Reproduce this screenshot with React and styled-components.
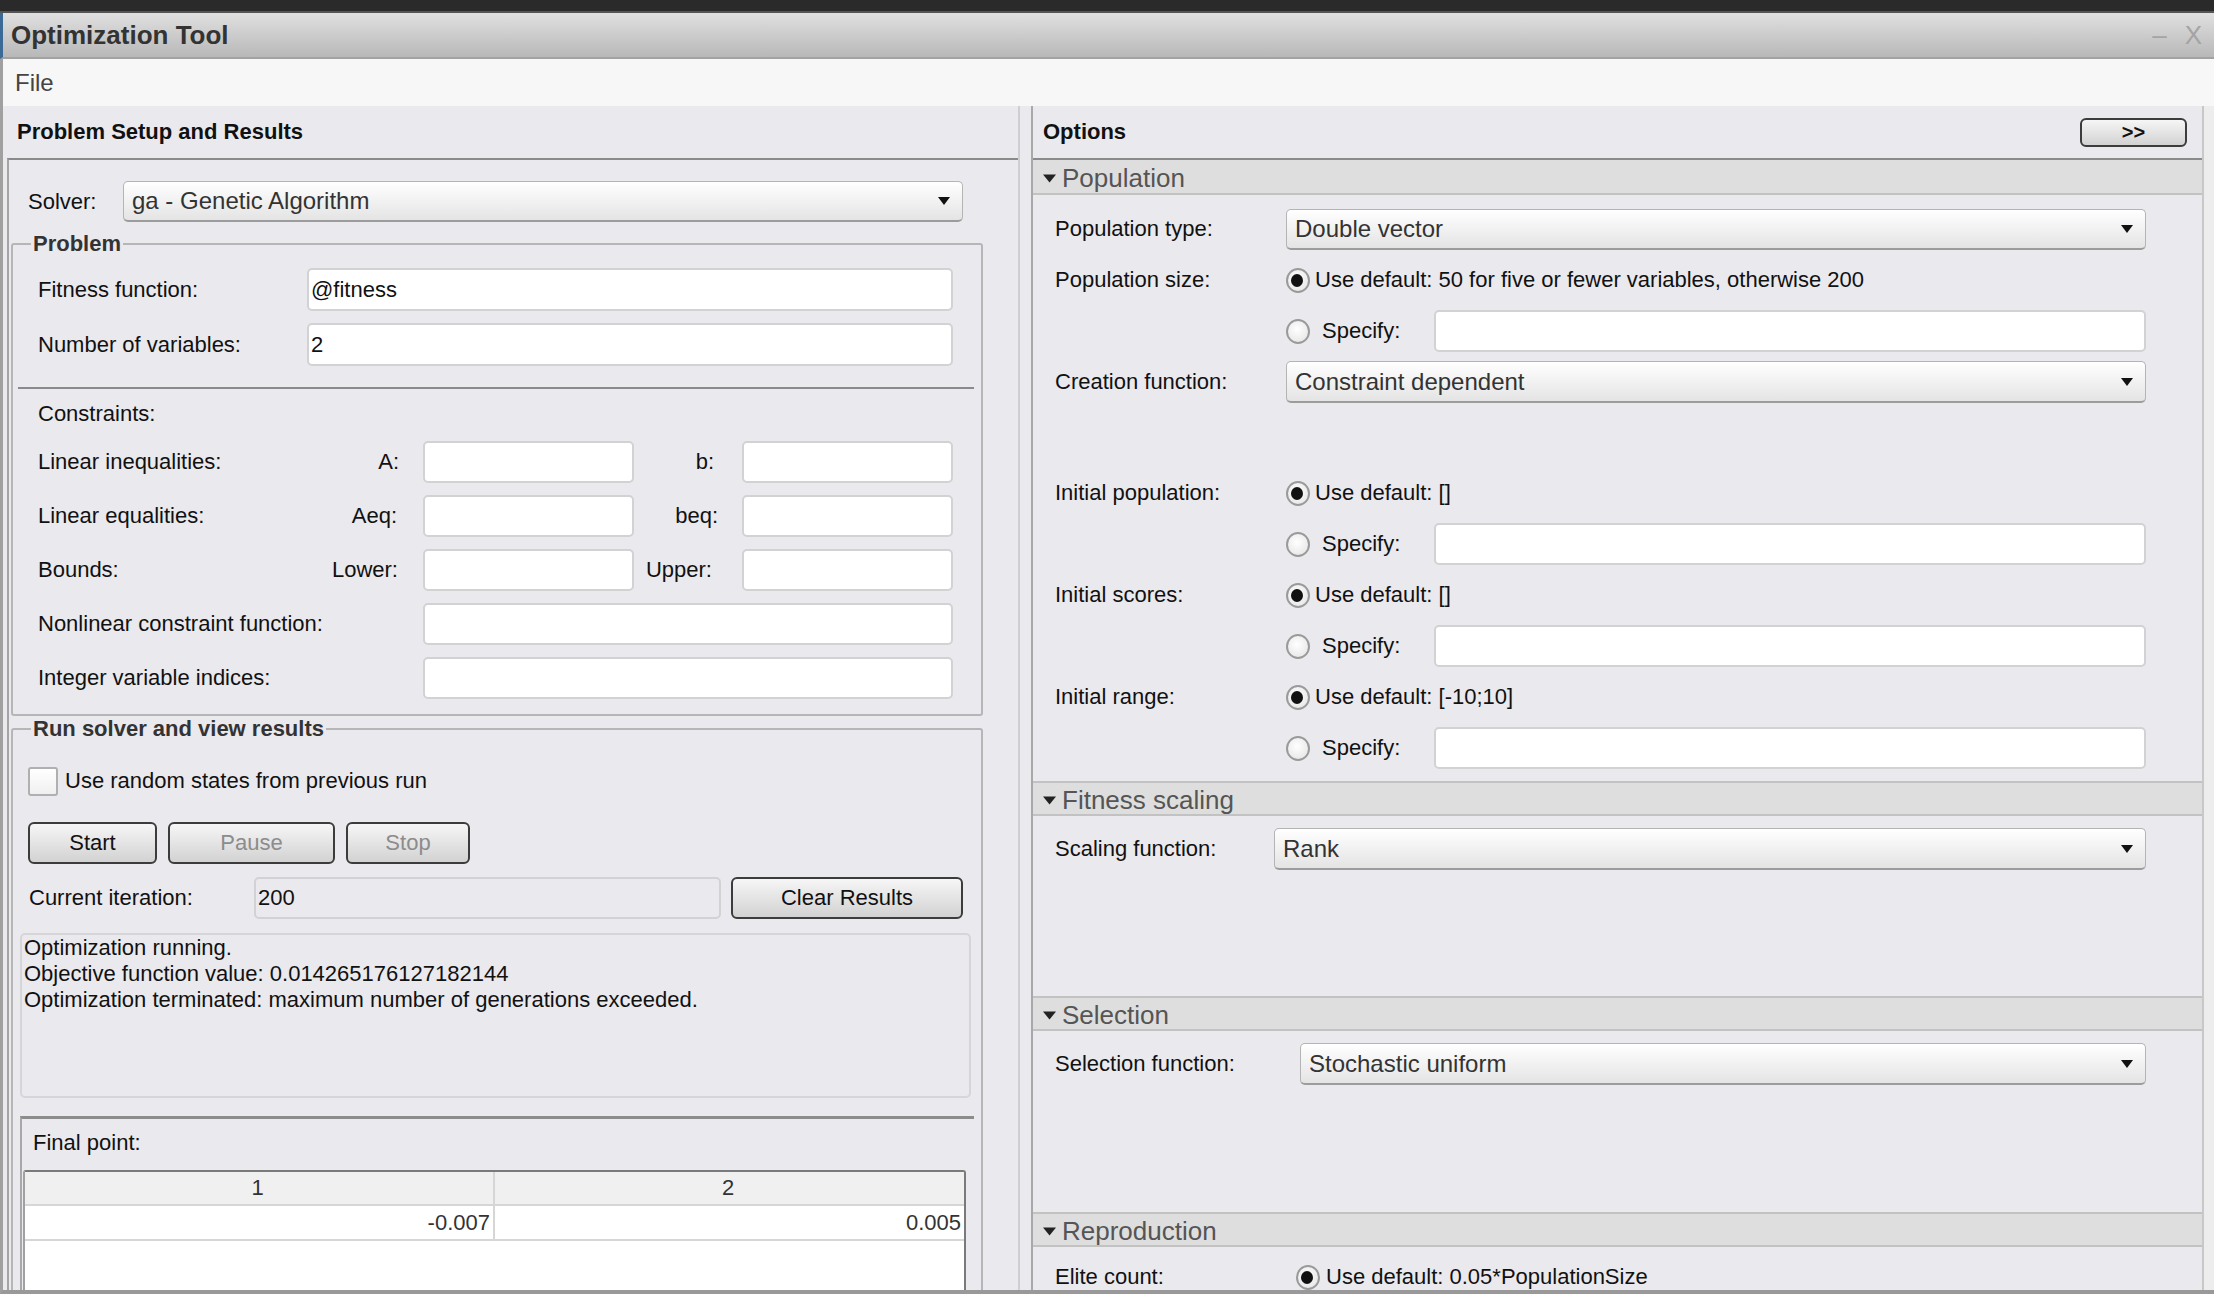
import styled, { createGlobalStyle } from "styled-components";

const GlobalStyle = createGlobalStyle`
  html, body {
    margin: 0;
    padding: 0;
    background: #2b2b2b;
  }
  body {
    font-family: "Liberation Sans", Arial, Helvetica, sans-serif;
  }
  * {
    box-sizing: border-box;
  }
`;

const Window = styled.div`
  width: 2214px;
  height: 1294px;
  display: flex;
  flex-direction: column;
  overflow: hidden;
  background: #2b2b2b;
`;

const TopStrip = styled.div`
  height: 13px;
  flex-shrink: 0;
  background: #2a2a2a;
  border-bottom: 2px solid #555;
`;

const TitleBar = styled.div`
  height: 46px;
  flex-shrink: 0;
  display: flex;
  align-items: center;
  justify-content: space-between;
  padding: 0 12px 0 11px;
  background: linear-gradient(#e0e0e0, #b8b8b8);
  border-bottom: 2px solid #a2a2a2;
  border-left: 3px solid #3b6a96;
`;

const Title = styled.div`
  font-size: 26px;
  font-weight: bold;
  color: #333;
  margin-left: -3px;
`;

const WinControls = styled.div`
  display: flex;
  gap: 18px;
  font-size: 26px;
  color: #a4a4a4;
`;

const MenuBar = styled.div`
  height: 47px;
  flex-shrink: 0;
  display: flex;
  align-items: center;
  padding-left: 12px;
  background: #f7f7f7;
  border-left: 3px solid #a0a0a0;
`;

const MenuItem = styled.span`
  font-size: 24px;
  color: #444;
`;

const Body = styled.div`
  flex: 1;
  display: flex;
  min-height: 0;
  background: #eae9ed;
  border-left: 3px solid #a0a0a0;
  border-bottom: 4px solid #999;
  overflow: hidden;
`;

const LeftPanel = styled.div`
  width: 1015px;
  flex-shrink: 0;
  display: flex;
  flex-direction: column;
`;

const PanelHeader = styled.div`
  height: ${(p) => p.$h || 52}px;
  flex-shrink: 0;
  display: flex;
  align-items: center;
  justify-content: space-between;
  padding: 0 15px 0 ${(p) => p.$pad || 14}px;
  font-size: 22px;
  font-weight: bold;
  color: #111;
  border-bottom: ${(p) => (p.$line ? "2px solid #8a8a8a" : "none")};
`;

const LeftBox = styled.div`
  flex: 1;
  margin-left: 4px;
  border-left: 2px solid #a4a4a4;
  border-top: 2px solid #8a8a8a;
  overflow: hidden;
  padding-top: 21px;
`;

const SolverRow = styled.div`
  display: flex;
  align-items: center;
  padding-left: 19px;
  height: 41px;
`;

const Label = styled.span`
  font-size: 22px;
  color: #111;
  white-space: nowrap;
  width: ${(p) => (p.$w ? `${p.$w}px` : "auto")};
  text-align: ${(p) => p.$align || "left"};
  padding-right: ${(p) => p.$pr || 0}px;
  flex-shrink: 0;
`;

const SelectBox = styled.div`
  height: ${(p) => p.$h || 42}px;
  width: ${(p) => (p.$w ? `${p.$w}px` : "auto")};
  flex: ${(p) => (p.$w ? "none" : 1)};
  display: flex;
  align-items: center;
  justify-content: space-between;
  padding: 0 12px 0 8px;
  border: 1px solid #b4b4b4;
  border-bottom: 2px solid #9c9c9c;
  border-radius: 5px;
  background: linear-gradient(#ffffff, #e4e4e4);
  font-size: 24px;
  color: #333;
`;

const Arrow = () => (
  <svg width="12" height="10" viewBox="0 0 12 10">
    <path d="M0 1 L12 1 L6 9 Z" fill="#111" />
  </svg>
);

const Select = ({ value, w, h }) => (
  <SelectBox $w={w} $h={h}>
    <span>{value}</span>
    <Arrow />
  </SelectBox>
);

const GroupBox = styled.fieldset`
  margin: ${(p) => p.$mt || 0}px 0 0 2px;
  width: 972px;
  min-width: 0;
  min-height: ${(p) => p.$minH || 0}px;
  padding: 0 7px ${(p) => p.$pb || 0}px 5px;
  border: 2px solid #b6b6b6;
  border-radius: 3px;
`;

const GroupTitle = styled.legend`
  margin-left: 13px;
  padding: 0 2px;
  font-size: 22px;
  line-height: 26px;
  font-weight: bold;
  color: #333;
`;

const FieldRows = styled.div`
  display: flex;
  flex-direction: column;
  gap: 12px;
  padding: 11px 21px 0 20px;
`;

const FieldRow = styled.div`
  display: grid;
  grid-template-columns: 269px 1fr;
  align-items: center;
  height: 43px;
`;

const TextField = styled.div`
  height: ${(p) => p.$h || 42}px;
  display: flex;
  align-items: center;
  padding-left: 2px;
  background: ${(p) => (p.$disabled ? "#eae9ed" : "#fff")};
  border: 2px solid #d2d2d4;
  border-radius: 5px;
  font-size: 22px;
  color: #111;
  grid-column: ${(p) => p.$span || "auto"};
  width: ${(p) => (p.$w ? `${p.$w}px` : "auto")};
  flex: ${(p) => (p.$w ? "none" : 1)};
`;

const Separator = styled.div`
  height: 2px;
  margin-top: 21px;
  background: #8a8a8a;
`;

const Caption = styled.div`
  font-size: 22px;
  line-height: 26px;
  color: #111;
  margin: 12px 0 0 20px;
`;

const ConstraintGrid = styled.div`
  display: grid;
  grid-template-columns: 267px 118px 211px 108px 211px;
  grid-auto-rows: 42px;
  row-gap: 12px;
  align-items: center;
  margin-top: 14px;
  padding-left: 20px;
`;

const WideLabel = styled(Label)`
  grid-column: 1 / 3;
`;

const CheckRow = styled.div`
  display: flex;
  align-items: center;
  gap: 7px;
  margin: 25px 0 0 10px;
  height: 28px;
`;

const CheckBox = styled.span`
  width: 30px;
  height: 29px;
  border: 2px solid #b0b0b0;
  border-radius: 3px;
  background: linear-gradient(#ffffff, #f0f0f0);
`;

const ButtonRow = styled.div`
  display: flex;
  gap: 11px;
  margin: 27px 0 0 10px;
`;

const Button = styled.div`
  width: ${(p) => p.$w}px;
  height: ${(p) => p.$h || 42}px;
  display: flex;
  align-items: center;
  justify-content: center;
  border: 2px solid #3c3c3c;
  border-radius: 6px;
  background: linear-gradient(#f6f6f6, #d2d2d2);
  font-size: ${(p) => p.$fs || 22}px;
  color: ${(p) => (p.$disabled ? "#8c8c8c" : "#111")};
`;

const IterationRow = styled.div`
  display: flex;
  align-items: center;
  margin: 13px 0 0 11px;
  height: 42px;
  width: 935px;
`;

const StatusBox = styled.div`
  margin: 14px 3px 0 2px;
  height: 165px;
  padding: 0 2px;
  border: 2px solid #d6d6d8;
  border-radius: 5px;
  font-size: 22px;
  line-height: 26px;
  color: #111;
`;

const ResultPanel = styled.div`
  margin: 18px 0 0 2px;
  border-top: 3px solid #8c8c8c;
  border-left: 2px solid #a8a8a8;
  padding: 11px 0 0 1px;
`;

const ResultLabel = styled.div`
  font-size: 22px;
  line-height: 26px;
  color: #111;
  padding-left: 10px;
`;

const Table = styled.div`
  margin-top: 14px;
  width: 943px;
  border-top: 2px solid #7a7a7a;
  border-left: 2px solid #a0a0a0;
  border-right: 2px solid #7a7a7a;
  border-radius: 3px 3px 0 0;
  background: #fff;
  height: 200px;
`;

const TableRow = styled.div`
  display: grid;
  grid-template-columns: 470px 1fr;
  height: ${(p) => (p.$head ? 34 : 35)}px;
  background: ${(p) => (p.$head ? "#f0f0f0" : "#fff")};
  border-bottom: 2px solid #d6d6d6;
`;

const Cell = styled.div`
  display: flex;
  align-items: center;
  justify-content: ${(p) => (p.$head ? "center" : "flex-end")};
  padding-right: 3px;
  font-size: 22px;
  color: #333;
  border-right: ${(p) => (p.$last ? "none" : "2px solid #d6d6d6")};
`;

const Splitter = styled.div`
  width: 13px;
  flex-shrink: 0;
  border-left: 2px solid #cfcfd2;
`;

const RightPanel = styled.div`
  width: 1171px;
  flex-shrink: 0;
  display: flex;
  flex-direction: column;
  border-left: 2px solid #a8a8a8;
`;

const RightEdge = styled.div`
  flex: 1;
  background: #ededee;
  border-left: 2px solid #c8c8c8;
`;

const SectionHeader = styled.div`
  height: 35px;
  flex-shrink: 0;
  display: flex;
  align-items: center;
  gap: 6px;
  padding: 3px 0 0 10px;
  background: #dedede;
  border-top: ${(p) => (p.$first ? "none" : "2px solid #c2c2c2")};
  border-bottom: 2px solid #c2c2c2;
  font-size: 26px;
  color: #555;
`;

const Caret = () => (
  <svg width="13" height="9" viewBox="0 0 13 9">
    <path d="M0 0.5 L13 0.5 L6.5 8.5 Z" fill="#222" />
  </svg>
);

const SectionBody = styled.div`
  display: flex;
  flex-direction: column;
  gap: 9px;
  height: ${(p) => (p.$h ? `${p.$h}px` : "auto")};
  flex-shrink: 0;
  padding: ${(p) => p.$pt || 13}px 56px 0 22px;
`;

const OptRow = styled.div`
  display: grid;
  grid-template-columns: ${(p) => p.$label || 231}px 1fr;
  align-items: center;
  height: 42px;
  margin-top: ${(p) => p.$mt || 0}px;
`;

const Choice = styled.div`
  display: flex;
  align-items: center;
  gap: ${(p) => p.$gap || 5}px;
  font-size: 22px;
  color: #111;
  white-space: nowrap;
`;

const SpecifyChoice = styled(Choice)`
  width: 148px;
  flex-shrink: 0;
`;

const SpecifyWrap = styled.div`
  display: flex;
  align-items: center;
`;

const RadioDot = styled.span`
  width: 24px;
  height: 25px;
  flex-shrink: 0;
  border-radius: 50%;
  border: 2px solid #9a9a9a;
  background: radial-gradient(circle at 45% 40%, #ffffff, #e2e2e2);
  display: flex;
  align-items: center;
  justify-content: center;
  &::after {
    content: "";
    width: 12px;
    height: 13px;
    border-radius: 50%;
    background: ${(p) => (p.$on ? "#111" : "transparent")};
    margin-left: -2px;
  }
`;

const RadioDefault = ({ text, gap }) => (
  <Choice $gap={gap}>
    <RadioDot $on />
    <span>{text}</span>
  </Choice>
);

const RadioSpecify = () => (
  <SpecifyWrap>
    <SpecifyChoice $gap={12}>
      <RadioDot />
      <span>Specify:</span>
    </SpecifyChoice>
    <TextField />
  </SpecifyWrap>
);

export default function App() {
  return (
    <>
      <GlobalStyle />
      <Window>
        <TopStrip />
        <TitleBar>
          <Title>Optimization Tool</Title>
          <WinControls>
            <span>–</span>
            <span>X</span>
          </WinControls>
        </TitleBar>
        <MenuBar>
          <MenuItem>File</MenuItem>
        </MenuBar>
        <Body>
          <LeftPanel>
            <PanelHeader>Problem Setup and Results</PanelHeader>
            <LeftBox>
              <SolverRow>
                <Label $w={95}>Solver:</Label>
                <Select value="ga - Genetic Algorithm" w={840} h={41} />
              </SolverRow>

              <GroupBox $mt={9} $pb={15}>
                <GroupTitle>Problem</GroupTitle>
                <FieldRows>
                  <FieldRow>
                    <Label>Fitness function:</Label>
                    <TextField $h={43}>@fitness</TextField>
                  </FieldRow>
                  <FieldRow>
                    <Label>Number of variables:</Label>
                    <TextField $h={43}>2</TextField>
                  </FieldRow>
                </FieldRows>
                <Separator />
                <Caption>Constraints:</Caption>
                <ConstraintGrid>
                  <Label>Linear inequalities:</Label>
                  <Label $align="right" $pr={24}>A:</Label>
                  <TextField />
                  <Label $align="right" $pr={28}>b:</Label>
                  <TextField />

                  <Label>Linear equalities:</Label>
                  <Label $align="right" $pr={26}>Aeq:</Label>
                  <TextField />
                  <Label $align="right" $pr={24}>beq:</Label>
                  <TextField />

                  <Label>Bounds:</Label>
                  <Label $align="right" $pr={25}>Lower:</Label>
                  <TextField />
                  <Label $align="right" $pr={30}>Upper:</Label>
                  <TextField />

                  <WideLabel>Nonlinear constraint function:</WideLabel>
                  <TextField $span="3 / 6" />

                  <WideLabel>Integer variable indices:</WideLabel>
                  <TextField $span="3 / 6" />
                </ConstraintGrid>
              </GroupBox>

              <GroupBox $minH={640}>
                <GroupTitle>Run solver and view results</GroupTitle>
                <CheckRow>
                  <CheckBox />
                  <Label>Use random states from previous run</Label>
                </CheckRow>
                <ButtonRow>
                  <Button $w={129}>Start</Button>
                  <Button $w={167} $disabled>Pause</Button>
                  <Button $w={124} $disabled>Stop</Button>
                </ButtonRow>
                <IterationRow>
                  <Label $w={225}>Current iteration:</Label>
                  <TextField $w={467} $disabled>200</TextField>
                  <Label $w={10} />
                  <Button $w={232}>Clear Results</Button>
                </IterationRow>
                <StatusBox>
                  <div>Optimization running.</div>
                  <div>Objective function value: 0.014265176127182144</div>
                  <div>Optimization terminated: maximum number of generations exceeded.</div>
                </StatusBox>
                <ResultPanel>
                  <ResultLabel>Final point:</ResultLabel>
                  <Table>
                    <TableRow $head>
                      <Cell $head>1</Cell>
                      <Cell $head $last>2</Cell>
                    </TableRow>
                    <TableRow>
                      <Cell>-0.007</Cell>
                      <Cell $last>0.005</Cell>
                    </TableRow>
                  </Table>
                </ResultPanel>
              </GroupBox>
            </LeftBox>
          </LeftPanel>

          <Splitter />

          <RightPanel>
            <PanelHeader $h={54} $pad={10} $line>
              <span>Options</span>
              <Button $w={107} $h={29} $fs={20}>&gt;&gt;</Button>
            </PanelHeader>

            <SectionHeader $first>
              <Caret />
              <span>Population</span>
            </SectionHeader>
            <SectionBody $h={586}>
              <OptRow>
                <Label>Population type:</Label>
                <Select value="Double vector" h={41} />
              </OptRow>
              <OptRow>
                <Label>Population size:</Label>
                <RadioDefault text="Use default: 50 for five or fewer variables, otherwise 200" />
              </OptRow>
              <OptRow>
                <span />
                <RadioSpecify />
              </OptRow>
              <OptRow>
                <Label>Creation function:</Label>
                <Select value="Constraint dependent" />
              </OptRow>
              <OptRow $mt={60}>
                <Label>Initial population:</Label>
                <RadioDefault text="Use default: []" />
              </OptRow>
              <OptRow>
                <span />
                <RadioSpecify />
              </OptRow>
              <OptRow>
                <Label>Initial scores:</Label>
                <RadioDefault text="Use default: []" />
              </OptRow>
              <OptRow>
                <span />
                <RadioSpecify />
              </OptRow>
              <OptRow>
                <Label>Initial range:</Label>
                <RadioDefault text="Use default: [-10;10]" />
              </OptRow>
              <OptRow>
                <span />
                <RadioSpecify />
              </OptRow>
            </SectionBody>

            <SectionHeader>
              <Caret />
              <span>Fitness scaling</span>
            </SectionHeader>
            <SectionBody $h={180} $pt={12}>
              <OptRow $label={219}>
                <Label>Scaling function:</Label>
                <Select value="Rank" />
              </OptRow>
            </SectionBody>

            <SectionHeader>
              <Caret />
              <span>Selection</span>
            </SectionHeader>
            <SectionBody $h={181} $pt={12}>
              <OptRow $label={245}>
                <Label>Selection function:</Label>
                <Select value="Stochastic uniform" />
              </OptRow>
            </SectionBody>

            <SectionHeader>
              <Caret />
              <span>Reproduction</span>
            </SectionHeader>
            <SectionBody $pt={9}>
              <OptRow $label={241}>
                <Label>Elite count:</Label>
                <RadioDefault text="Use default: 0.05*PopulationSize" gap={6} />
              </OptRow>
            </SectionBody>
          </RightPanel>
          <RightEdge />
        </Body>
      </Window>
    </>
  );
}
